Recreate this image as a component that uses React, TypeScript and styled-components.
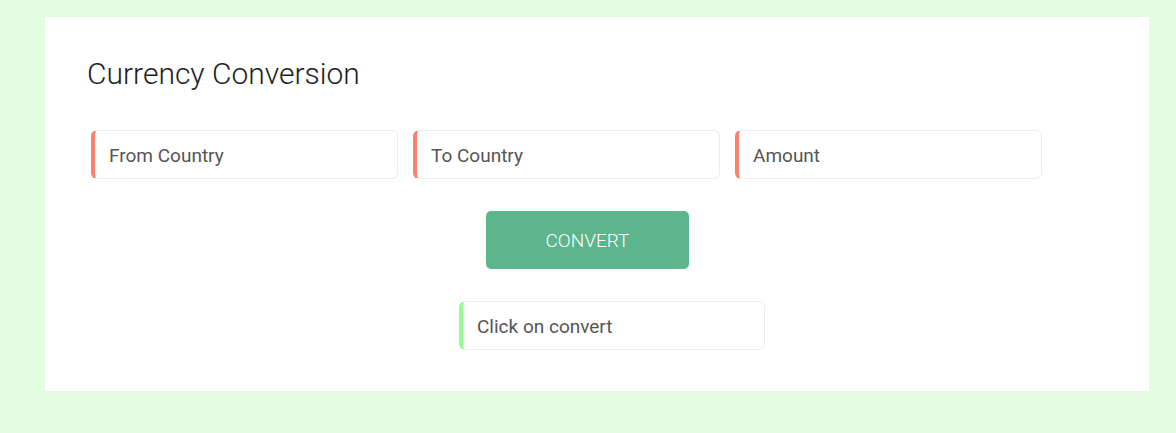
import React from "react";
import styled, { createGlobalStyle } from "styled-components";

const Global = createGlobalStyle`
  html, body { margin: 0; padding: 0; background: #e3fde3; }
  body { font-family: Roboto, "Noto Sans", sans-serif; }
  * { box-sizing: border-box; }
`;

const Page = styled.div`
  padding: 17px 27px 42px 45px;
`;

const Card = styled.div`
  background: #ffffff;
  width: 1104px;
  padding: 39px 0 41px 0;
  display: flex;
  flex-direction: column;
`;

const Title = styled.h2`
  margin: 0 0 39px 42px;
  font-size: 30px;
  font-weight: 300;
  line-height: 35px;
  color: #222;
`;

const Row = styled.div`
  display: flex;
  gap: 15px;
  padding-left: 46px;
`;

const Field = styled.input<{ $accent: string; $width?: number }>`
  width: ${(p) => p.$width ?? 307}px;
  height: 49px;
  border: 1px solid #ececec;
  border-left: 4px solid ${(p) => p.$accent};
  border-radius: 6px;
  padding: 1px 0 0 14px;
  font-family: Roboto, "Noto Sans", sans-serif;
  font-size: 19px;
  color: #555;
  background: #fff;
  outline: none;
  &::placeholder { color: #555; opacity: 1; }
`;

const ConvertButton = styled.button`
  align-self: flex-start;
  margin: 32px 0 0 441px;
  width: 203px;
  height: 58px;
  border: none;
  border-radius: 5px;
  background: #5cb58d;
  color: #fff;
  font-family: Roboto, "Noto Sans", sans-serif;
  font-size: 19px;
  font-weight: 300;
  text-transform: uppercase;
  cursor: pointer;
`;

const ResultWrap = styled.div`
  margin: 32px 0 0 414px;
`;

export default function App() {
  return (
    <>
      <Global />
      <Page>
        <Card>
          <Title>Currency Conversion</Title>
          <Row>
            <Field $accent="#fa8072" placeholder="From Country" />
            <Field $accent="#fa8072" placeholder="To Country" />
            <Field $accent="#fa8072" placeholder="Amount" />
          </Row>
          <ConvertButton>Convert</ConvertButton>
          <ResultWrap>
            <Field $accent="#98fb98" $width={306} placeholder="Click on convert" readOnly />
          </ResultWrap>
        </Card>
      </Page>
    </>
  );
}
